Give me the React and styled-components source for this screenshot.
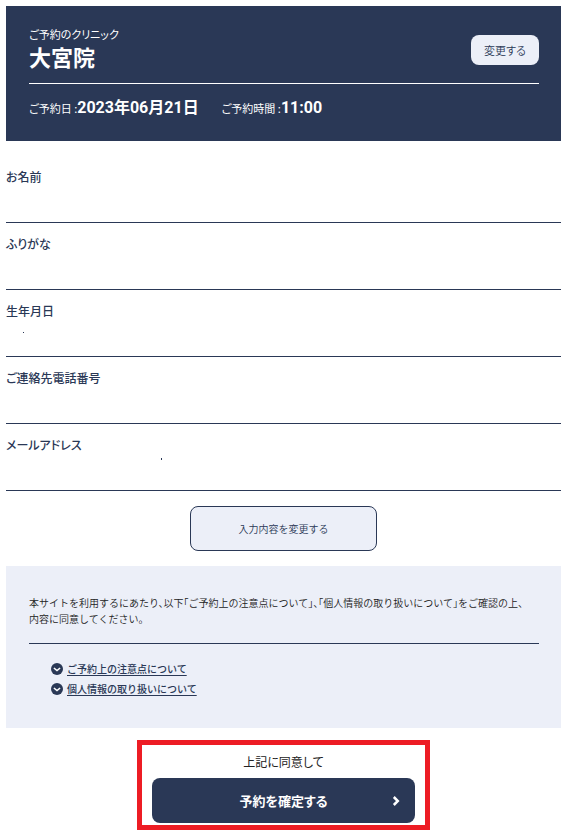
import React from "react";
import styled, { createGlobalStyle } from "styled-components";

const GlobalStyle = createGlobalStyle`
  * {
    box-sizing: border-box;
  }

  body {
    margin: 0;
    background-color: #fff;
    color: #2a3856;
    font-family: "Noto Sans CJK JP", sans-serif;
    font-size: 12px;
    line-height: 18px;
    font-feature-settings: "palt";
  }

  button {
    font-family: inherit;
    font-feature-settings: inherit;
    cursor: pointer;
  }
`;

const Page = styled.main`
  padding: 6px 5px 0 6px;
`;

const Summary = styled.header`
  padding: 20px 22px 21px 23px;
  background-color: #2a3856;
  color: #fff;
`;

const Clinic = styled.div`
  display: flex;
  align-items: center;
  justify-content: space-between;
  padding-bottom: 9px;
  border-bottom: 1px solid #fff;
`;

const Caption = styled.p`
  margin: 0;
  font-size: 11px;
  line-height: 16px;
`;

const ClinicName = styled.h1`
  margin: 0;
  padding-bottom: 4px;
  font-size: 22px;
  line-height: 28px;
  font-weight: 700;
`;

const ChangeButton = styled.button`
  width: 68px;
  height: 30px;
  padding: 0;
  border: none;
  border-radius: 8px;
  background-color: #eceff8;
  color: #2a3856;
  font-size: 11px;
  font-weight: 350;
`;

const Schedule = styled.dl`
  display: flex;
  gap: 23px;
  margin: 0;
  padding-top: 12px;
  line-height: 24px;
`;

const ScheduleItem = styled.div`
  display: flex;
  align-items: baseline;
`;

const Term = styled.dt`
  font-size: 11px;
  line-height: 16px;
`;

const Detail = styled.dd`
  margin: 0;
  font-family: Roboto, "Noto Sans CJK JP", sans-serif;
  font-size: 16px;
  font-weight: 700;
`;

const Fields = styled.dl`
  margin: 15px 0;
`;

const Field = styled.div`
  padding-top: 12px;
  border-bottom: 1px solid #2a3856;
`;

const Label = styled.dt`
  font-weight: 500;
`;

const Value = styled.dd`
  height: 36px;
  margin: 0;
`;

const EditButton = styled.button`
  display: block;
  width: 187px;
  height: 45px;
  margin: 0 auto 15px;
  padding: 0;
  border: 1px solid #2a3856;
  border-radius: 8px;
  background-color: #eceff8;
  color: #2a3856;
  font-size: 10px;
  font-weight: 350;
  font-feature-settings: "halt";
`;

const Notice = styled.section`
  padding: 29px 22px 29px 23px;
  background-color: #eceff8;
  font-size: 10px;
  font-feature-settings: "halt";
`;

const NoticeText = styled.p`
  margin: 0;
  padding-bottom: 16px;
  border-bottom: 1px solid #2a3856;
  color: #222;
  line-height: 16px;
  font-weight: 350;
`;

const Links = styled.ul`
  margin: 15px 0 0;
  padding: 0 0 0 22px;
  list-style: none;
`;

const LinkRow = styled.li`
  display: flex;
  align-items: center;
  gap: 4px;
  line-height: 20px;
  font-weight: 500;

  a {
    color: #2a3856;
    text-underline-offset: 2px;
  }
`;

const Confirm = styled.section`
  width: 293px;
  margin: 12px auto 0;
  padding: 8px 10px 2px;
  border: 5px solid #ed1c24;
  text-align: center;
`;

const Agreement = styled.p`
  margin: 0 0 7px;
  color: #222;
`;

const ConfirmButton = styled.button`
  display: grid;
  grid-template-columns: 1fr auto 1fr;
  align-items: center;
  width: 100%;
  height: 45px;
  padding: 0 15px;
  border: none;
  border-radius: 8px;
  background-color: #2a3856;
  color: #fff;
  font-size: 13px;
  font-weight: 700;

  span {
    grid-column: 2;
  }

  svg {
    justify-self: end;
  }
`;

const fields = [
  { label: "お名前" },
  { label: "ふりがな" },
  { label: "生年月日", dot: { x: 17, y: 12, height: 1 } },
  { label: "ご連絡先電話番号" },
  { label: "メールアドレス", dot: { x: 155, y: 4, height: 2 } },
];

const links = [
  { id: "caution", text: "ご予約上の注意点について" },
  { id: "privacy", text: "個人情報の取り扱いについて" },
];

const CircleDown = () => (
  <svg width="12" height="12" viewBox="0 0 12 12" aria-hidden="true">
    <circle cx="6" cy="6" r="6" fill="#2a3856" />
    <path d="M2.9 5L6 7.5 9.1 5" fill="none" stroke="#fff" strokeWidth="1.6" />
  </svg>
);

const ChevronRight = () => (
  <svg width="8" height="10" viewBox="0 0 8 10" aria-hidden="true">
    <path d="M1.8 1l4 4-4 4" fill="none" stroke="#fff" strokeWidth="2.5" />
  </svg>
);

const App = () => {
  return (
    <>
      <GlobalStyle />
      <Page>
        <Summary>
          <Clinic>
            <div>
              <Caption>ご予約のクリニック</Caption>
              <ClinicName>大宮院</ClinicName>
            </div>
            <ChangeButton type="button">変更する</ChangeButton>
          </Clinic>
          <Schedule>
            <ScheduleItem>
              <Term>ご予約日 :</Term>
              <Detail>2023年06月21日</Detail>
            </ScheduleItem>
            <ScheduleItem>
              <Term>ご予約時間 :</Term>
              <Detail>11:00</Detail>
            </ScheduleItem>
          </Schedule>
        </Summary>

        <Fields>
          {fields.map(({ label, dot }) => (
            <Field key={label}>
              <Label>{label}</Label>
              <Value>
                {dot && (
                  <svg width="200" height="36" aria-hidden="true">
                    <rect x={dot.x} y={dot.y} width="1" height={dot.height} fill="#2a3856" />
                  </svg>
                )}
              </Value>
            </Field>
          ))}
        </Fields>

        <EditButton type="button">入力内容を変更する</EditButton>

        <Notice>
          <NoticeText>
            本サイトを利用するにあたり、以下「ご予約上の注意点について」、「個人情報の取り扱いについて」をご確認の上、
            <br />
            内容に同意してください。
          </NoticeText>
          <Links>
            {links.map((item) => (
              <LinkRow key={item.id}>
                <CircleDown />
                <a href={`#${item.id}`}>{item.text}</a>
              </LinkRow>
            ))}
          </Links>
        </Notice>

        <Confirm>
          <Agreement>上記に同意して</Agreement>
          <ConfirmButton type="submit">
            <span>予約を確定する</span>
            <ChevronRight />
          </ConfirmButton>
        </Confirm>
      </Page>
    </>
  );
};

export default App;
